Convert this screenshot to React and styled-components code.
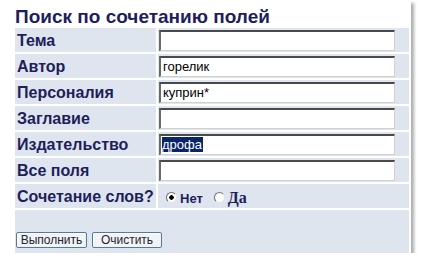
import React from 'react';
import styled, { createGlobalStyle } from 'styled-components';

const Global = createGlobalStyle`
body {
  margin: 0;
  background: #ffffff;
  font-family: 'Liberation Sans', Arial, sans-serif;
}
`

const Panel = styled.form`
width: 398px;
margin-left: 13px;
padding: 0 2px;
box-sizing: border-box;
background: #ffffff;
box-shadow: 3px 3px 3px rgba(0, 0, 0, 0.32);
`

const Title = styled.h1`
margin: 0;
height: 28px;
box-sizing: border-box;
padding: 6px 0 0 0;
font-size: 19px;
line-height: 21px;
font-weight: bold;
color: #1e1e5c;
`

const Grid = styled.div`
display: grid;
grid-template-columns: 141px 251px;
grid-auto-rows: 24px;
gap: 2px;
`

const Label = styled.label`
display: flex;
align-items: center;
padding: 2px 0 0 2px;
box-sizing: border-box;
background: #dfe5ee;
font-size: 16px;
font-weight: bold;
color: #1e1e5c;
white-space: nowrap;
`

const Cell = styled.div`
display: flex;
align-items: center;
padding-left: 1px;
background: #dfe5ee;
`

const TextInput = styled.input`
width: 236px;
height: 21px;
box-sizing: border-box;
margin: 0;
padding: 0 2px;
border-style: solid;
border-width: 2px 1px 1px 2px;
border-color: #4a4a4a #d0d0d0 #d0d0d0 #6a6a6a;
background: #ffffff;
font-family: 'Liberation Sans', Arial, sans-serif;
font-size: 13px;
color: #000000;
outline: none;
`

const FakeInput = styled.div`
width: 236px;
height: 21px;
box-sizing: border-box;
padding: 0 1px;
display: flex;
align-items: center;
border-style: solid;
border-width: 2px 1px 1px 2px;
border-color: #4a4a4a #d0d0d0 #d0d0d0 #6a6a6a;
background: #ffffff;
font-size: 13px;
`

const Selected = styled.span`
background: #0a246a;
color: #ffffff;
padding: 1px 1px 1px 0;
line-height: 13px;
`

const Radio = styled.input`
appearance: none;
width: 11px;
height: 11px;
margin: 2px 3px 0 ${p => p.$first ? '7px' : '11px'};
border-radius: 50%;
border-style: solid;
border-width: 1px;
border-color: #6e6e6e #e4e4e4 #e4e4e4 #6e6e6e;
background: ${p => p.checked
    ? 'radial-gradient(circle, #000 0 2px, #fff 2.5px)'
    : '#ffffff'};
`

const RadioText = styled.span`
font-size: ${p => p.$serif ? '16px' : '13px'};
font-family: ${p => p.$serif ? "'Liberation Serif', 'Times New Roman', serif" : "'Liberation Sans', Arial, sans-serif"};
font-weight: bold;
color: #1e1e5c;
margin-top: 4px;
`

const Footer = styled.div`
height: 43px;
margin-top: 2px;
box-sizing: border-box;
padding: 22px 0 0 1px;
background: #dfe5ee;
display: flex;
align-items: flex-start;
gap: 5px;
`

const Button = styled.button`
height: 16px;
width: ${p => p.$w}px;
padding: 0;
box-sizing: border-box;
border: 1px solid #4f7aa2;
border-radius: 2px;
box-shadow: inset 1px 1px 0 #ffffff;
background: #f1f3f5;
font-family: 'Liberation Sans', Arial, sans-serif;
font-size: 12px;
line-height: 13px;
color: #1d2530;
`

const fields = [
    { name: 'Тема', value: '' },
    { name: 'Автор', value: 'горелик' },
    { name: 'Персоналия', value: 'куприн*' },
    { name: 'Заглавие', value: '' },
    { name: 'Издательство', value: 'дрофа', selected: true },
    { name: 'Все поля', value: '' },
]

export default function App() {
    return (
        <>
            <Global />
            <Panel>
                <Title>Поиск по сочетанию полей</Title>
                <Grid>
                    {fields.map(f => (
                        <React.Fragment key={f.name}>
                            <Label>{f.name}</Label>
                            <Cell>
                                {f.selected
                                    ? <FakeInput><Selected>{f.value}</Selected></FakeInput>
                                    : <TextInput defaultValue={f.value} />}
                            </Cell>
                        </React.Fragment>
                    ))}
                    <Label>Сочетание слов?</Label>
                    <Cell>
                        <Radio type="radio" name="mode" $first checked readOnly />
                        <RadioText>Нет</RadioText>
                        <Radio type="radio" name="mode" checked={false} readOnly />
                        <RadioText $serif>Да</RadioText>
                    </Cell>
                </Grid>
                <Footer>
                    <Button type="button" $w={71}>Выполнить</Button>
                    <Button type="button" $w={70}>Очистить</Button>
                </Footer>
            </Panel>
        </>
    );
}
